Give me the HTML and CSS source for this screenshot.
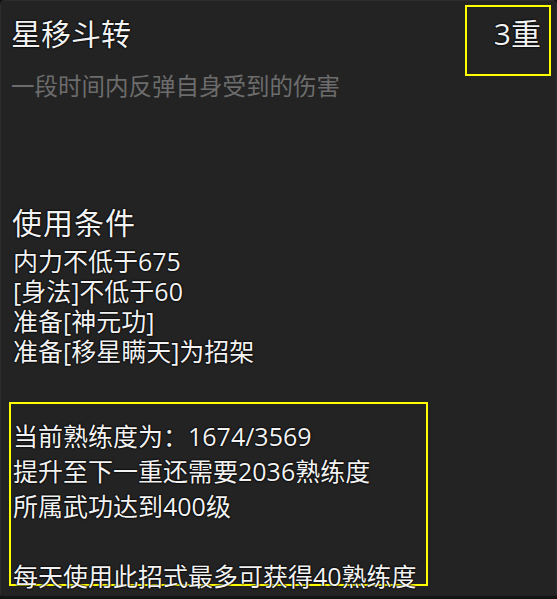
FILE: index.html
```html
<!DOCTYPE html>
<html lang="zh">
<head>
<meta charset="utf-8">
<link rel="stylesheet" href="styles.css">
</head>
<body>
<div class="panel">
  <div class="header">
    <div class="head-left">
      <div class="title">星移斗转</div>
      <div class="subtitle">一段时间内反弹自身受到的伤害</div>
    </div>
    <div class="level">3重</div>
  </div>
  <div class="cond">
    <div class="cond-title">使用条件</div>
    <div class="line">内力不低于675</div>
    <div class="line">[身法]不低于60</div>
    <div class="line">准备[神元功]</div>
    <div class="line">准备[移星瞒天]为招架</div>
  </div>
  <div class="progress">
    <div class="pline">当前熟练度为：1674/3569</div>
    <div class="pline">提升至下一重还需要2036熟练度</div>
    <div class="pline">所属武功达到400级</div>
    <div class="pline">&nbsp;</div>
    <div class="pline">每天使用此招式最多可获得40熟练度</div>
  </div>
</div>
</body>
</html>
```
FILE: styles.css
```css
html, body {
  margin: 0;
  padding: 0;
  background: #121212;
}
body {
  font-family: "Open Sans", "Noto Sans CJK SC", sans-serif;
}
.panel {
  box-sizing: border-box;
  width: 557px;
  height: 599px;
  overflow: hidden;
  background: #232323;
  border: 1px solid #2c2c2c;
  border-bottom: 3px solid #151515;
  border-radius: 5px;
  padding: 0 0 0 11px;
  color: #f2f2f2;
  text-shadow: 0 0 2px #000, 0 0 2px #000, 0 0 1px #000;
}
.header {
  display: flex;
  justify-content: space-between;
  align-items: flex-start;
}
.head-left {
  padding-top: 15px;
}
.title {
  font-size: 30px;
  line-height: 36px;
  margin-left: -1px;
}
.subtitle {
  margin-top: 19px;
  font-size: 23.5px;
  line-height: 30px;
  color: #6c6c6c;
  text-shadow: none;
  margin-left: -1px;
}
.level {
  box-sizing: border-box;
  width: 86px;
  height: 71px;
  margin-top: 4px;
  margin-right: 5px;
  border: 2px solid #ffff00;
  padding: 9px 8px 0 0;
  text-align: right;
  font-size: 30px;
  line-height: 36px;
}
.cond {
  margin-top: 104px;
}
.cond-title {
  font-size: 30px;
  line-height: 36px;
  letter-spacing: 1px;
  margin-bottom: 5px;
}
.line {
  font-size: 25px;
  line-height: 30px;
  margin-left: 1px;
}
.progress {
  box-sizing: border-box;
  width: 419px;
  height: 184px;
  margin-top: 36px;
  margin-left: -3px;
  border: 2px solid #ffff00;
  padding: 15px 0 0 2px;
}
.pline {
  font-size: 25px;
  line-height: 35px;
  white-space: nowrap;
}
```
